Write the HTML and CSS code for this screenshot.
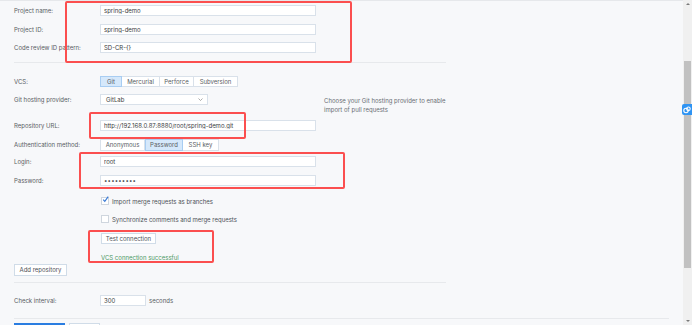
FILE: index.html
```html
<!DOCTYPE html>
<html>
<head>
  <title>VCS Settings</title>
  <link rel="stylesheet" href="styles.css">
</head>
<body>
  <div class="page">
    <div class="form">
      <div class="row">
        <span class="label">Project name:</span>
        <input class="text-input" type="text" value="spring-demo">
      </div>
      <div class="row">
        <span class="label">Project ID:</span>
        <input class="text-input" type="text" value="spring-demo">
      </div>
      <div class="row">
        <span class="label">Code review ID pattern:</span>
        <input class="text-input" type="text" value="SD-CR-{}">
      </div>

      <div class="divider"></div>

      <div class="row vcs-row">
        <span class="label">VCS:</span>
        <div class="segments">
          <span class="segment active seg-git">Git</span>
          <span class="segment seg-merc">Mercurial</span>
          <span class="segment seg-perf">Perforce</span>
          <span class="segment seg-svn">Subversion</span>
        </div>
      </div>
      <div class="row provider-row">
        <span class="label">Git hosting provider:</span>
        <div class="select">
          <span>GitLab</span>
          <svg class="chevron" width="5" height="3" viewBox="0 0 5 3"><path d="M0.5 0.5 L2.5 2.5 L4.5 0.5" fill="none" stroke="#888" stroke-width="0.7"/></svg>
        </div>
        <p class="help">Choose your Git hosting provider to enable<br>import of pull requests</p>
      </div>
      <div class="row url-row">
        <span class="label">Repository URL:</span>
        <input class="text-input" type="text" value="http://192.168.0.87:8880/root/spring-demo.git">
      </div>
      <div class="row auth-row">
        <span class="label">Authentication method:</span>
        <div class="segments">
          <span class="segment seg-anon">Anonymous</span>
          <span class="segment active seg-pass">Password</span>
          <span class="segment seg-ssh">SSH key</span>
        </div>
      </div>
      <div class="row">
        <span class="label">Login:</span>
        <input class="text-input" type="text" value="root">
      </div>
      <div class="row">
        <span class="label">Password:</span>
        <input class="text-input password" type="text" value="&#8226;&#8226;&#8226;&#8226;&#8226;&#8226;&#8226;&#8226;&#8226;">
      </div>
      <div class="row check-row first-check">
        <span class="label"></span>
        <span class="checkbox checked">
          <svg width="7" height="7" viewBox="0 0 7 7"><path d="M1.2 3.6 L2.8 5.4 L6.2 0.6" fill="none" stroke="#3577d4" stroke-width="1.1"/></svg>
        </span>
        <span class="check-text">Import merge requests as branches</span>
      </div>
      <div class="row check-row">
        <span class="label"></span>
        <span class="checkbox"></span>
        <span class="check-text">Synchronize comments and merge requests</span>
      </div>
      <div class="row test-row">
        <span class="label"></span>
        <button class="btn test-btn">Test connection</button>
      </div>
      <div class="row success-row">
        <span class="label"></span>
        <span class="success">VCS connection successful</span>
      </div>
      <div class="row add-row">
        <button class="btn add-btn">Add repository</button>
      </div>

      <div class="divider"></div>

      <div class="row interval-row">
        <span class="label">Check interval:</span>
        <input class="text-input short" type="text" value="300">
        <span class="unit">seconds</span>
      </div>

      <div class="divider wide"></div>

      <div class="row actions">
        <button class="btn primary"></button>
        <button class="btn cancel"></button>
      </div>
    </div>

    <!-- review annotations -->
    <div class="mark mark-1"></div>
    <div class="mark mark-2"></div>
    <div class="mark mark-3"></div>
    <div class="mark mark-4"></div>

    <div class="float-tab">
      <svg width="8" height="8" viewBox="0 0 8 8"><circle cx="3" cy="4.5" r="2.2" fill="none" stroke="#fff" stroke-width="1.1"/><circle cx="5.4" cy="2.8" r="1.8" fill="none" stroke="#fff" stroke-width="1.1"/></svg>
    </div>
  </div>

  <div class="scrollbar">
    <span class="arrow up"></span>
    <div class="thumb"></div>
    <span class="arrow down"></span>
  </div>
</body>
</html>
```

FILE: styles.css
```css
html, body {
  margin: 0;
  height: 100%;
  overflow: hidden;
}
body {
  background-color: #f7f8fa;
  font-family: "Inter", "Noto Sans", sans-serif;
  font-size: 6px;
  color: #595d63;
  border-top: 1px solid #e6e8eb;
  box-sizing: border-box;
}
.page {
  position: relative;
  width: 683px;
  height: 100%;
}
.form {
  display: flex;
  flex-direction: column;
  padding: 4px 0 0 14px;
}
.row {
  display: flex;
  align-items: center;
  height: 11px;
  margin-bottom: 7.5px;
  flex-shrink: 0;
}
.label {
  width: 86px;
  flex-shrink: 0;
}
.text-input {
  width: 216px;
  height: 11px;
  box-sizing: border-box;
  border: 1px solid #d9e1ea;
  background: #fff;
  padding: 0 3px;
  font-family: inherit;
  font-size: 6px;
  color: #3a3d42;
  outline: none;
}
.text-input.password {
  letter-spacing: 0.2px;
}
.text-input.short {
  width: 46px;
}
.divider {
  width: 432px;
  height: 1px;
  background: #e7e9ec;
  margin: 1.5px 0 13px;
}
.divider.wide {
  width: 655px;
}
.segments {
  display: flex;
  height: 11px;
}
.segment {
  display: flex;
  align-items: center;
  justify-content: center;
  box-sizing: border-box;
  border: 1px solid #d9e1ea;
  border-left: none;
  background: #fff;
  color: #595d63;
}
.segment:first-child {
  border-left: 1px solid #d9e1ea;
}
.segment.active {
  background: #d5e8fb;
  border-color: #a8cdf2;
  border-left: 1px solid #a8cdf2;
}
.seg-git { width: 22px; }
.seg-merc { width: 38px; }
.seg-perf { width: 34px; }
.seg-svn { width: 44px; }
.seg-anon { width: 45px; }
.seg-pass { width: 38px; }
.seg-ssh { width: 36px; }
.auth-row .segments {
  height: 12px;
}
.vcs-row {
  margin-bottom: 7px;
}
.select {
  width: 108px;
  height: 11px;
  box-sizing: border-box;
  border: 1px solid #d9e1ea;
  background: #fff;
  padding: 0 4px 0 5px;
  display: flex;
  align-items: center;
  justify-content: space-between;
  color: #3a3d42;
}
.help {
  margin: 0 0 0 116px;
  line-height: 8.5px;
  padding-top: 12px;
  color: #6a6e74;
}
.provider-row {
  margin-bottom: 15px;
}
.url-row {
  margin-bottom: 8px;
}
.auth-row {
  margin-bottom: 6px;
}
.check-row {
  margin-bottom: 7px;
}
.first-check {
  margin-top: 2.5px;
}
.checkbox {
  width: 6px;
  height: 6px;
  border: 1px solid #cfd6de;
  background: #fff;
  margin-left: 1px;
  position: relative;
}
.checkbox svg {
  position: absolute;
  left: 0;
  top: -2px;
}
.check-text {
  margin-left: 3px;
  color: #4d5157;
}
.test-row {
  margin-top: 1.5px;
  margin-bottom: 7.5px;
}
.btn {
  height: 11px;
  box-sizing: border-box;
  border: 1px solid #d0dce8;
  background: #fff;
  font-family: inherit;
  font-size: 6px;
  color: #4d5157;
  padding: 0;
  margin-left: 1px;
}
.test-btn {
  width: 55px;
}
.success {
  margin-left: 1px;
  color: #4e9a66;
}
.success-row {
  margin-bottom: 1.5px;
}
.add-btn {
  height: 12px;
  margin-left: 0;
  width: 53px;
}
.add-row {
  margin-bottom: 6.5px;
}
.add-row + .divider {
  margin-top: 0;
  margin-bottom: 12.5px;
}
.unit {
  margin-left: 3px;
}
.interval-row {
  margin-bottom: 10px;
}
.interval-row + .divider {
  margin-bottom: 5px;
}
.btn.primary {
  width: 51px;
  height: 12px;
  background: #2a7de1;
  border-color: #2a7de1;
  margin-left: 0;
}
.btn.cancel {
  width: 31px;
  height: 12px;
  margin-left: 4px;
}
.mark {
  position: absolute;
  border: 2px solid #fb4f4f;
  border-radius: 2px;
  box-sizing: border-box;
}
.mark-1 { left: 65px; top: 0px; width: 287px; height: 62px; }
.mark-2 { left: 89px; top: 111px; width: 157px; height: 27px; }
.mark-3 { left: 79px; top: 151px; width: 266px; height: 37px; }
.mark-4 { left: 88px; top: 229px; width: 126px; height: 33px; }
.float-tab {
  position: absolute;
  right: -9px;
  top: 103px;
  width: 10px;
  height: 11px;
  background: #2f94f3;
  border-radius: 2px 0 0 2px;
  display: flex;
  align-items: center;
  justify-content: center;
  z-index: 2;
}
.scrollbar {
  position: fixed;
  top: 0;
  right: 0;
  width: 9px;
  height: 100%;
  background: #f0f0f0;
}
.thumb {
  position: absolute;
  left: 1px;
  top: 61px;
  width: 7px;
  height: 207px;
  background: #c1c1c1;
}
.arrow {
  position: absolute;
  left: 2.5px;
  width: 0;
  height: 0;
  border-left: 2px solid transparent;
  border-right: 2px solid transparent;
}
.arrow.up {
  top: 3px;
  border-bottom: 2px solid #7a7a7a;
}
.arrow.down {
  bottom: 3px;
  border-top: 2px solid #7a7a7a;
}
```
